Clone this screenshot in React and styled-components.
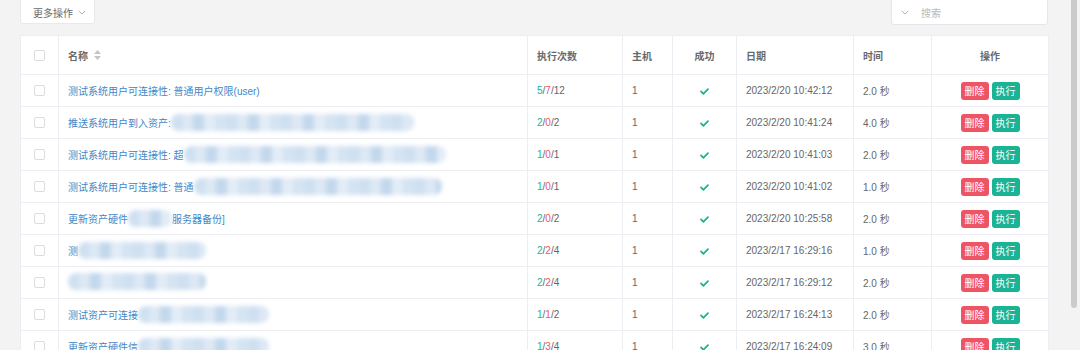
import React from "react";
import styled, { createGlobalStyle } from "styled-components";
import { FaCheck } from "react-icons/fa";

const GlobalStyle = createGlobalStyle`
  html, body {
    margin: 0;
    padding: 0;
    background: #f3f3f4;
    overflow: hidden;
  }
  * { box-sizing: border-box; }
`;

const rows = [
  { name: "测试系统用户可连接性: 普通用户权限(user)", ok: 5, fail: 7, total: 12, date: "2023/2/20 10:42:12", time: "2.0 秒" },
  { name: "推送系统用户到入资产: ", mask: 243, ok: 2, fail: 0, total: 2, date: "2023/2/20 10:41:24", time: "4.0 秒" },
  { name: "测试系统用户可连接性: 超", mask: 262, ok: 1, fail: 0, total: 1, date: "2023/2/20 10:41:03", time: "2.0 秒" },
  { name: "测试系统用户可连接性: 普通", mask: 248, ok: 1, fail: 0, total: 1, date: "2023/2/20 10:41:02", time: "1.0 秒" },
  { name: "更新资产硬件", mask: 44, tail: "服务器备份]", ok: 2, fail: 0, total: 2, date: "2023/2/20 10:25:58", time: "2.0 秒" },
  { name: "测", mask: 128, ok: 2, fail: 2, total: 4, date: "2023/2/17 16:29:16", time: "1.0 秒" },
  { name: "", mask: 138, ok: 2, fail: 2, total: 4, date: "2023/2/17 16:29:12", time: "2.0 秒" },
  { name: "测试资产可连接", mask: 131, ok: 1, fail: 1, total: 2, date: "2023/2/17 16:24:13", time: "2.0 秒" },
  { name: "更新资产硬件信", mask: 131, ok: 1, fail: 3, total: 4, date: "2023/2/17 16:24:09", time: "3.0 秒" },
];

export default function App() {
  return (
    <>
      <GlobalStyle />
      <Viewport>
        <Page>
          <Toolbar>
            <MoreButton>
              更多操作 <Chevron />
            </MoreButton>
            <SearchBox>
              <Chevron />
              <Placeholder>搜索</Placeholder>
            </SearchBox>
          </Toolbar>
          <Table>
            <colgroup>
              <col style={{ width: 38 }} />
              <col style={{ width: 469 }} />
              <col style={{ width: 95 }} />
              <col style={{ width: 50 }} />
              <col style={{ width: 64 }} />
              <col style={{ width: 117 }} />
              <col style={{ width: 78 }} />
              <col style={{ width: 117 }} />
            </colgroup>
            <thead>
              <tr>
                <Th $center><Checkbox /></Th>
                <Th>
                  <NameHead>名称 <SortIcon /></NameHead>
                </Th>
                <Th>执行次数</Th>
                <Th>主机</Th>
                <Th $center>成功</Th>
                <Th>日期</Th>
                <Th>时间</Th>
                <Th $center>操作</Th>
              </tr>
            </thead>
            <tbody>
              {rows.map((r, i) => (
                <tr key={i}>
                  <Td $center><Checkbox /></Td>
                  <Td>
                    <NameLink>
                      {r.name}
                      {r.mask && <Mask style={{ width: r.mask }} />}
                      {r.tail}
                    </NameLink>
                  </Td>
                  <Td>
                    <Count $tone="ok">{r.ok}</Count>/<Count $tone="fail">{r.fail}</Count>/{r.total}
                  </Td>
                  <Td>1</Td>
                  <Td $center><CheckMark /></Td>
                  <Td>{r.date}</Td>
                  <Td>{r.time}</Td>
                  <Td $center>
                    <Actions>
                      <ActionButton $variant="danger">删除</ActionButton>
                      <ActionButton $variant="primary">执行</ActionButton>
                    </Actions>
                  </Td>
                </tr>
              ))}
            </tbody>
          </Table>
        </Page>
        <ScrollThumb />
      </Viewport>
    </>
  );
}

function Chevron() {
  return (
    <ChevronSvg viewBox="0 0 10 6" width="8" height="5">
      <polyline points="1,1 5,5 9,1" fill="none" stroke="#999" strokeWidth="1" />
    </ChevronSvg>
  );
}

function SortIcon() {
  return (
    <svg width="7" height="10" viewBox="0 0 7 10">
      <polygon points="3.5,0 7,4 0,4" fill="#c4c4c4" />
      <polygon points="0,6 7,6 3.5,10" fill="#c4c4c4" />
    </svg>
  );
}

const Viewport = styled.div`
  position: relative;
  height: 100vh;
  overflow: hidden;
  font-family: "Liberation Sans", "Noto Sans CJK SC", sans-serif;
  font-size: 10px;
  color: #676a6c;
`;

const ScrollThumb = styled.div`
  position: absolute;
  top: 0;
  right: 3px;
  width: 6px;
  height: 308px;
  border-radius: 0 0 3px 3px;
  background: #cbcbcb;
`;

const Page = styled.div`
  padding: 0 32px 33px 20px;
`;

const Toolbar = styled.div`
  display: flex;
  justify-content: space-between;
  align-items: flex-start;
  margin-top: -6px;
  margin-bottom: 10px;
  width: 1028px;
`;

const MoreButton = styled.div`
  display: flex;
  align-items: center;
  gap: 5px;
  width: 75px;
  height: 30px;
  padding: 6px 0 0 12px;
  background: #fff;
  border: 1px solid #e7eaec;
  border-radius: 3px;
  color: #676a6c;
`;

const SearchBox = styled.div`
  display: flex;
  align-items: center;
  gap: 12px;
  width: 157px;
  height: 31px;
  padding: 6px 0 0 9px;
  background: #fff;
  border: 1px solid #e5e6e7;
  border-radius: 3px;
`;

const ChevronSvg = styled.svg`
  display: block;
`;

const Placeholder = styled.span`
  color: #b8b8b8;
`;

const Table = styled.table`
  width: 1028px;
  table-layout: fixed;
  border-collapse: collapse;
  background: #fff;
  border: 1px solid #eceef3;
`;

const Th = styled.th`
  height: 39px;
  padding: 0 9px;
  font-weight: bold;
  text-align: ${(p) => (p.$center ? "center" : "left")};
  color: #676a6c;
  border: 1px solid #eceef3;
`;

const Td = styled.td`
  height: 32px;
  padding: 0 9px;
  text-align: ${(p) => (p.$center ? "center" : "left")};
  vertical-align: middle;
  white-space: nowrap;
  overflow: hidden;
  color: #666;
  border: 1px solid #eceef3;
`;

const NameHead = styled.span`
  display: inline-flex;
  align-items: center;
  gap: 6px;
`;

const Checkbox = styled.span`
  display: inline-block;
  width: 11px;
  height: 11px;
  border: 1px solid #dcdcdc;
  border-radius: 2px;
  background: #fff;
  vertical-align: middle;
`;

const NameLink = styled.span`
  display: inline-flex;
  align-items: center;
  color: #3f87c8;
`;

const Mask = styled.span`
  display: inline-block;
  height: 17px;
  border-radius: 8px;
  background: repeating-linear-gradient(
    90deg,
    #cfe0f1 0 11px,
    #dde8f4 11px 22px,
    #c3d8ed 22px 33px,
    #e2ecf6 33px 44px,
    #d5e4f2 44px 55px
  );
  filter: blur(2px);
`;

const Count = styled.span`
  color: ${(p) => (p.$tone === "ok" ? "#1ab394" : "#ed5565")};
`;

const CheckMark = styled(FaCheck)`
  color: #1ab394;
  font-size: 9px;
  vertical-align: middle;
`;

const Actions = styled.div`
  display: inline-flex;
  gap: 3px;
`;

const ActionButton = styled.span`
  display: inline-flex;
  align-items: center;
  justify-content: center;
  width: 28px;
  height: 18px;
  border-radius: 3px;
  color: #fff;
  background: ${(p) => (p.$variant === "danger" ? "#ed5565" : "#1ab394")};
`;
